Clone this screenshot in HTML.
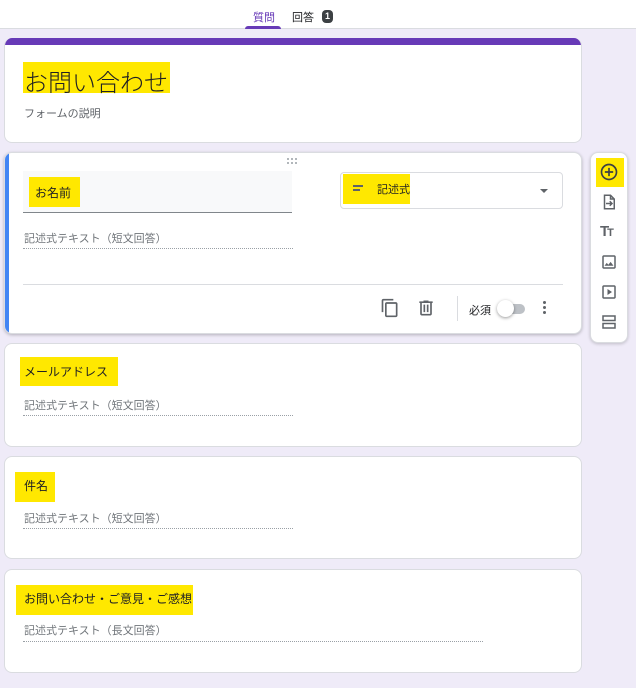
<!DOCTYPE html>
<html><head><meta charset="utf-8"><style>
*{margin:0;padding:0;box-sizing:border-box}
body{width:636px;height:688px;background:#efebf8;font-family:"Liberation Sans","Noto Sans CJK JP",sans-serif;position:relative;overflow:hidden;color:#202124}
.a{position:absolute}
.card{position:absolute;left:4px;width:578px;background:#fff;border:1px solid #dadce0;border-radius:8px}
.hl{position:absolute;background:#ffe800}
.t{position:absolute;white-space:nowrap}
.ph{position:absolute;font-size:11px;color:#70757a;white-space:nowrap}
.dot{position:absolute;height:0;border-bottom:1px dotted #9aa0a6}
</style></head><body>
<div class="a" style="left:0;top:0;width:636px;height:29px;background:#fff;border-bottom:1px solid #dadce0"></div>
<div class="t" style="left:253px;top:9px;font-size:11px;color:#673ab7">質問</div>
<div class="a" style="left:245px;top:26px;width:36px;height:3px;background:#673ab7;border-radius:3px 3px 0 0"></div>
<div class="t" style="left:292px;top:9px;font-size:11px;color:#202124">回答</div>
<div class="a" style="left:322px;top:10px;width:11px;height:13px;background:#3c4043;border-radius:4px;color:#fff;font-size:9px;font-weight:bold;text-align:center;line-height:13px">1</div>

<div class="card" style="top:38px;height:105px;border-top:none;overflow:hidden">
<div class="a" style="left:-1px;top:0;width:580px;height:7px;background:#673ab7"></div>
</div>
<div class="hl" style="left:23px;top:62px;width:147px;height:31px"></div>
<div class="t" style="left:24px;top:63px;font-size:24px;color:#202124;font-weight:300">お問い合わせ</div>
<div class="t" style="left:24px;top:105px;font-size:11px;color:#5f6368">フォームの説明</div>

<div class="card" style="top:152px;height:182px;box-shadow:0 1px 3px rgba(0,0,0,.25);overflow:hidden">
<div class="a" style="left:-1px;top:-1px;width:5px;height:184px;background:#4285f4"></div>
</div>
<svg class="a" style="left:286px;top:157px" width="12" height="8"><g fill="#9aa0a6"><circle cx="2" cy="2" r="1"/><circle cx="6" cy="2" r="1"/><circle cx="10" cy="2" r="1"/><circle cx="2" cy="6" r="1"/><circle cx="6" cy="6" r="1"/><circle cx="10" cy="6" r="1"/></g></svg>
<div class="a" style="left:23px;top:171px;width:269px;height:42px;background:#f8f9fa;border-bottom:1px solid #80868b"></div>
<div class="hl" style="left:29px;top:177px;width:51px;height:30px"></div>
<div class="t" style="left:35px;top:184px;font-size:12px">お名前</div>
<div class="a" style="left:340px;top:172px;width:223px;height:37px;border:1px solid #dadce0;border-radius:4px"></div>
<div class="hl" style="left:343px;top:174px;width:67px;height:30px"></div>
<div class="a" style="left:353px;top:185px;width:10px;height:1.5px;background:#5f6368"></div>
<div class="a" style="left:353px;top:189px;width:7px;height:1.5px;background:#5f6368"></div>
<div class="t" style="left:377px;top:181px;font-size:11px">記述式</div>
<div class="a" style="left:540px;top:189px;border:4px solid transparent;border-top:4px solid #5f6368"></div>
<div class="ph" style="left:24px;top:230px">記述式テキスト（短文回答）</div>
<div class="dot" style="left:23px;top:248px;width:270px"></div>
<div class="a" style="left:23px;top:284px;width:540px;height:1px;background:#dadce0"></div>
<svg class="a" style="left:380px;top:298px" width="20" height="20" viewBox="0 0 24 24"><path fill="#5f6368" d="M16 1H4c-1.1 0-2 .9-2 2v14h2V3h12V1zm3 4H8c-1.1 0-2 .9-2 2v14c0 1.1.9 2 2 2h11c1.100 0 2-.9 2-2V7c0-1.1-.9-2-2-2zm0 16H8V7h11v14z"/></svg>
<svg class="a" style="left:416px;top:298px" width="20" height="20" viewBox="0 0 24 24"><path fill="#5f6368" d="M15 4V3H9v1H4v2h1v13c0 1.1.9 2 2 2h10c1.1 0 2-.9 2-2V6h1V4h-5zm2 15H7V6h10v13zM9 8h2v9H9zm4 0h2v9h-2z"/></svg>
<div class="a" style="left:457px;top:296px;width:1px;height:25px;background:#dadce0"></div>
<div class="t" style="left:469px;top:302px;font-size:11px">必須</div>
<div class="a" style="left:501px;top:304px;width:24px;height:10px;background:#bdc1c6;border-radius:5px"></div>
<div class="a" style="left:497px;top:300px;width:17px;height:17px;background:#fff;border-radius:50%;box-shadow:0 1px 3px rgba(0,0,0,.4)"></div>
<div class="a" style="left:543px;top:301px;width:3px;height:3px;background:#5f6368;border-radius:50%;box-shadow:0 5px 0 #5f6368,0 10px 0 #5f6368"></div>

<div class="a" style="left:590px;top:152px;width:38px;height:191px;background:#fff;border:1px solid #dadce0;border-radius:8px;box-shadow:0 1px 3px rgba(0,0,0,.2)"></div>
<div class="hl" style="left:596px;top:158px;width:28px;height:29px"></div>
<svg class="a" style="left:599px;top:162px" width="20" height="20" viewBox="0 0 24 24"><path fill="#3c4043" d="M13 7h-2v4H7v2h4v4h2v-4h4v-2h-4V7zm-1-5C6.48 2 2 6.48 2 12s4.48 10 10 10 10-4.480 10-10S17.52 2 12 2zm0 18c-4.41 0-8-3.59-8-8s3.59-8 8-8 8 3.59 8 8-3.590 8-8 8z"/></svg>
<svg class="a" style="left:600px;top:193px" width="18" height="18" viewBox="0 0 24 24"><path fill="none" stroke="#5f6368" stroke-width="2" d="M6 3h8l5 5v13H6z M14 3v5h5 M8 14h8 M13 11l3 3-3 3"/></svg>
<div class="t" style="left:600px;top:223px;font-size:15px;font-weight:bold;color:#5f6368;letter-spacing:-2px">T<span style="font-size:11px">T</span></div>
<svg class="a" style="left:600px;top:253px" width="18" height="18" viewBox="0 0 24 24"><path fill="#5f6368" d="M19 5v14H5V5h14m0-2H5c-1.1 0-2 .9-2 2v14c0 1.1.9 2 2 2h14c1.1 0 2-.9 2-2V5c0-1.1-.9-2-2-2zm-4.86 8.86l-3 3.87L9 13.14 6 17h12l-3.86-5.14z"/></svg>
<svg class="a" style="left:600px;top:283px" width="18" height="18" viewBox="0 0 24 24"><path fill="#5f6368" d="M19 3H5c-1.1 0-2 .9-2 2v14c0 1.1.9 2 2 2h14c1.1 0 2-.9 2-2V5c0-1.1-.9-2-2-2zm0 16H5V5h14v14zM10 8v8l6-4z"/></svg>
<svg class="a" style="left:600px;top:313px" width="18" height="18" viewBox="0 0 24 24"><path fill="none" stroke="#5f6368" stroke-width="2" d="M4 4h16v6H4zM4 14h16v6H4z"/></svg>

<div class="card" style="top:343px;height:104px"></div>
<div class="hl" style="left:20px;top:357px;width:98px;height:29px"></div>
<div class="t" style="left:24px;top:363px;font-size:12px">メールアドレス</div>
<div class="ph" style="left:24px;top:397px">記述式テキスト（短文回答）</div>
<div class="dot" style="left:23px;top:415px;width:270px"></div>

<div class="card" style="top:456px;height:103px"></div>
<div class="hl" style="left:15px;top:472px;width:40px;height:30px"></div>
<div class="t" style="left:24px;top:477px;font-size:12px">件名</div>
<div class="ph" style="left:24px;top:510px">記述式テキスト（短文回答）</div>
<div class="dot" style="left:23px;top:528px;width:270px"></div>

<div class="card" style="top:569px;height:104px"></div>
<div class="hl" style="left:16px;top:585px;width:177px;height:30px"></div>
<div class="t" style="left:24px;top:590px;font-size:12px">お問い合わせ・ご意見・ご感想</div>
<div class="ph" style="left:24px;top:622px">記述式テキスト（長文回答）</div>
<div class="dot" style="left:23px;top:641px;width:460px"></div>
</body></html>
